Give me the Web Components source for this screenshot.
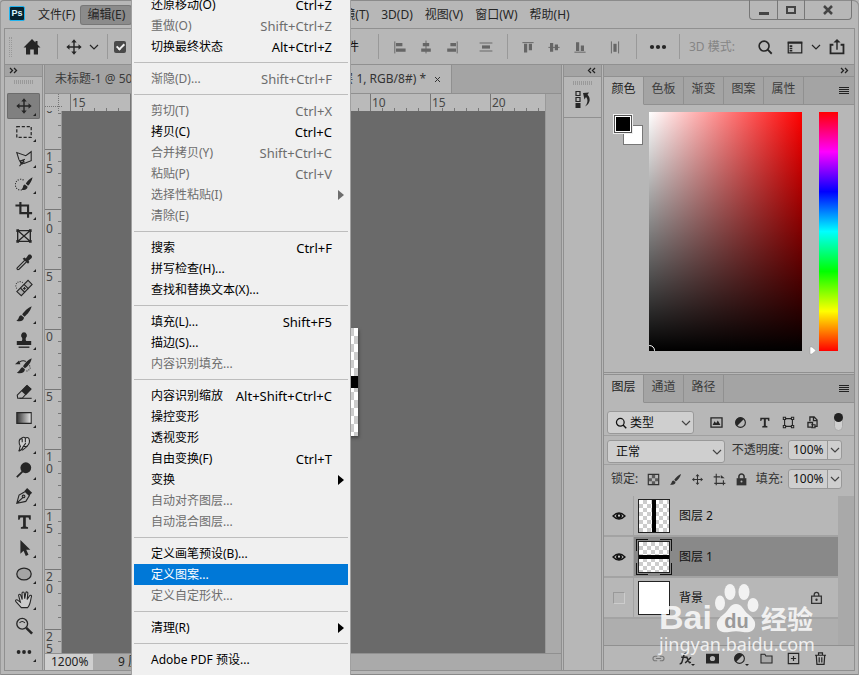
<!DOCTYPE html>
<html lang="zh-CN">
<head>
<meta charset="utf-8">
<title>Photoshop</title>
<style>
html,body{margin:0;height:100%;overflow:hidden}
body{font:12px/16px "Noto Sans","Noto Sans CJK SC",sans-serif;color:#262626;background:#b7b7b7;
--bg:#b7b7b7;--dark:#a4a4a4;--line:#909090;--field:#cfcfcf}
</style>
</head>
<body>
<ps-window>
  <ps-menubar slot="title"></ps-menubar>
  <ps-options slot="options"></ps-options>
  <ps-toolbar></ps-toolbar>
  <ps-document></ps-document>
  <ps-dock></ps-dock>
  <ps-panels></ps-panels>
  <ps-menu slot="menu">
    <ps-item key="Ctrl+Z">还原移动(O)</ps-item>
    <ps-item key="Shift+Ctrl+Z" off>重做(O)</ps-item>
    <ps-item key="Alt+Ctrl+Z">切换最终状态</ps-item>
    <ps-rule></ps-rule>
    <ps-item key="Shift+Ctrl+F" off>渐隐(D)...</ps-item>
    <ps-rule></ps-rule>
    <ps-item key="Ctrl+X" off>剪切(T)</ps-item>
    <ps-item key="Ctrl+C">拷贝(C)</ps-item>
    <ps-item key="Shift+Ctrl+C" off>合并拷贝(Y)</ps-item>
    <ps-item key="Ctrl+V" off>粘贴(P)</ps-item>
    <ps-item off more>选择性粘贴(I)</ps-item>
    <ps-item off>清除(E)</ps-item>
    <ps-rule></ps-rule>
    <ps-item key="Ctrl+F">搜索</ps-item>
    <ps-item>拼写检查(H)...</ps-item>
    <ps-item>查找和替换文本(X)...</ps-item>
    <ps-rule></ps-rule>
    <ps-item key="Shift+F5">填充(L)...</ps-item>
    <ps-item>描边(S)...</ps-item>
    <ps-item off>内容识别填充...</ps-item>
    <ps-rule></ps-rule>
    <ps-item key="Alt+Shift+Ctrl+C">内容识别缩放</ps-item>
    <ps-item>操控变形</ps-item>
    <ps-item>透视变形</ps-item>
    <ps-item key="Ctrl+T">自由变换(F)</ps-item>
    <ps-item more>变换</ps-item>
    <ps-item off>自动对齐图层...</ps-item>
    <ps-item off>自动混合图层...</ps-item>
    <ps-rule></ps-rule>
    <ps-item>定义画笔预设(B)...</ps-item>
    <ps-item active>定义图案...</ps-item>
    <ps-item off>定义自定形状...</ps-item>
    <ps-rule></ps-rule>
    <ps-item more>清理(R)</ps-item>
    <ps-rule></ps-rule>
    <ps-item>Adobe PDF 预设...</ps-item>
  </ps-menu>
  <ps-watermark slot="overlay"></ps-watermark>
</ps-window>

<script>
const RESET = `:host,*,*::before,*::after{box-sizing:border-box}
button,input,select{font:inherit;color:inherit;background:none;border:0;padding:0;margin:0;border-radius:0;appearance:none;outline:0}
button{display:flex;align-items:center;justify-content:center}`;

function define(name, css, html) {
  customElements.define(name, class extends HTMLElement {
    connectedCallback() {
      if (this.shadowRoot) return;
      const root = this.attachShadow({ mode: 'open' });
      root.innerHTML = `<style>${RESET}${css}</style>` + (typeof html === 'function' ? html(this) : html);
    }
  });
}

const CUR = 'fill="currentColor" stroke="none"';
const ICONS = {
  home: `<path ${CUR} d="M10 2 1.500 10.500H4V17.500h4.200v-5h3.600v5H16v-7h2.500L15.500 7.500V4h-2v1.500z"/>`,
  move: `<path d="M10 3v14M3 10h14" stroke-width="1.600"/><path ${CUR} d="m10 1.500 3 3.500H7zM10 18.500l3-3.500H7zM1.500 10 5 7v6zM18.500 10 15 7v6z"/>`,
  chevron: `<path d="m6 8 4 4 4-4"/>`,
  alignL: `<path d="M3.500 3v15"/><path ${CUR} d="M5 5h8v4H5zM5 12h12v4H5z"/>`,
  alignC: `<path d="M10 2v16"/><path ${CUR} d="M6 5h8v4H6zM4 12h12v4H4z"/>`,
  alignR: `<path d="M16.500 3v15"/><path ${CUR} d="M8 5h7v4H8zM4 12h11v4H4z"/>`,
  distV: `<path d="M2 5h16M2 15h16"/><path ${CUR} d="M5 8h10v4H5z"/>`,
  alignT: `<path d="M3 4.500h14"/><path ${CUR} d="M5 6h4v11H5zM11 6h4v8h-4z"/>`,
  alignM: `<path d="M3 10.500h14"/><path ${CUR} d="M5 5h4v11H5zM11 7h4v7h-4z"/>`,
  alignB: `<path d="M3 16.500h14"/><path ${CUR} d="M5 4h4v11H5zM11 8h4v7h-4z"/>`,
  distH: `<path d="M5.500 3v15M14.500 3v15"/><path ${CUR} d="M8 6h4v10H8z"/>`,
  dots: `<g ${CUR}><circle cx="4" cy="10" r="2.100"/><circle cx="10" cy="10" r="2.100"/><circle cx="16" cy="10" r="2.100"/></g>`,
  search: `<circle cx="9" cy="9" r="5.500" stroke-width="1.800"/><path d="m13 13 4.500 4.500" stroke-width="2"/>`,
  workspace: `<path d="M2.500 4.500h15v12h-15z" stroke-width="1.400"/><path d="M2 5.500h16" stroke-width="2"/><path ${CUR} d="M4 8h3v2H4zM4 10.700h3v1.600H4zM4 13h3v2H4z"/>`,
  share: `<path d="M6 7.500H2.800V17h14.400V7.500H14" stroke-width="2"/><path d="M10 13V3" stroke-width="1.600"/><path ${CUR} d="m10 1 4 4H6z"/>`,
  history: `<path d="M3 2.500h4v4H3zM3 8.500h4v4H3z" stroke-width="1.200"/><path ${CUR} d="M2.500 14h5v5h-5zM10 4l6-.5-1.500 2.200C18 9 17.500 14.500 12 17.500c3-3.500 3.200-7 1-9.500l-1.500 2.500z"/>`,
  burger: `<path d="M5 6.500h10M5 8.500h10M5 10.500h10M5 12.500h10" stroke-width="1" shape-rendering="crispEdges"/>`,
  marquee: `<path d="M2 4h16v12H2z" stroke-dasharray="3.500 2" stroke-width="1.400"/>`,
  lasso: `<path d="M4.500 12 2 4l10 3.500L18 3v10l-8 3M5 14l6-2.500M4.500 12.500l4 4M10 13l-5 6"/><circle cx="8" cy="14.500" r="2"/>`,
  quick: `<path d="M10 15.500A6 6 0 1 1 10 6" stroke-dasharray="1.200 1.500"/><path ${CUR} d="M19.500 2.500c-3 1.500-6 4.500-7.500 7l2.500 2.500C16.500 10 19 6 19.500 2.500zM11 10.500c-3 .5-1 3.500-4 5.500 3.500 1.500 7 0 7-3z"/>`,
  crop: `<path d="M6 1v12.500h13M.5 5h14v13.500" stroke-width="2.400"/>`,
  frame: `<path d="M3 4h14v12H3zM3 4l14 12M17 4 3 16" stroke-width="1.500"/><path ${CUR} d="M1.500 2.500h3v3h-3zM15.500 2.500h3v3h-3zM1.500 14.500h3v3h-3zM15.500 14.500h3v3h-3z"/>`,
  dropper: `<path d="m11 8-8.500 8.500c-1 1.500.5 2.500 2 1.500L13 9.500" stroke-width="1.300"/><path ${CUR} d="M8.500 6.500 10.500 5l1.500 1 3-4c2-1.500 5 1 3.500 3.500L15 8.500l1 1.500-1.500 2z"/>`,
  heal: `<path d="M2 10.500a4.500 4.500 0 1 1 7-6" stroke-dasharray="1 1.500"/><path fill="#aaa" d="M2 14 14.500 1.500 19 6 7 18.500z"/><path d="m6 10 5 5M10 6l5 5M10.500 9v3M9 10.500h3"/>`,
  brush: `<path ${CUR} d="M18.500 1.500c-4 1.500-8.500 6-10.500 9l2.500 2.500C14 10.500 17.500 6 18.500 1.500zM7 11.500c-3.500.5-2 4.500-5.500 6 4.500 1.500 8.500.2 8.500-3.500z"/>`,
  stamp: `<path ${CUR} d="M10 1.500a3.500 3.500 0 0 1 2.200 6c-.5 1-.4 2.500.3 3.500H18v4.500H2V11h5.500c.7-1 .8-2.500.3-3.500A3.500 3.500 0 0 1 10 1.500z"/><path d="M4 18h12" stroke-width="1.500"/>`,
  histbrush: `<path ${CUR} d="M18.500 1.500c-4 1.500-8 6-9.500 9l2 2C14.500 10.500 18 6 18.500 1.500zM8.500 11.500c-3 .5-2.500 4-6.500 6 4.500 1.500 9 0 9-4zM0 8l4.500-4L6 8z"/><path d="M5 5.500q4-2.500 7-.5"/><path d="M16 9.500q3 4-4 6.500" stroke-dasharray="1 1.500"/>`,
  eraser: `<path d="M2.500 13.500 13 3l4.500 3.500L8 17H3z" fill="#b7b7b7"/><path ${CUR} d="m7 9 6.500-7L18.500 7l-6.500 6.500z"/><path d="M5 17h13.500"/>`,
  gradient: `<defs><linearGradient id="g"><stop stop-color="#333"/><stop offset="1" stop-color="#e8e8e8"/></linearGradient></defs><path d="M2 4h16v12H2z" fill="url(#g)"/>`,
  smudge: `<path fill="#ccc" d="M4 18c2-2 .5-4 2-5.500C4 9.500 4 4.500 7 4c1-2 3.500-2 4.500-.5C13.500 2 16 3 16 6c.5 3-1 5-3 6.500M8 4v4M11.500 4v4M4 18q4-1 5-5l3-4M9 12.500l4 .5-5 4"/>`,
  dodge: `<circle ${CUR} cx="12" cy="7.500" r="6"/><path d="M8.500 11.500 2 18" stroke-width="2"/>`,
  pen: `<path d="M2 18 4.500 9l7-4L16 9.500 12 16zM2.500 17.500 9.500 11"/><circle cx="9.500" cy="10.500" r="1.500"/><path ${CUR} d="m10.500 4.500 3-3.500L19 6.500l-3 3z"/>`,
  type: `<path ${CUR} d="M3.500 2.500h14v5H16L15 5h-3v10l2.500.7V17.500h-8v-1.800L9 15V5H6L5 7.500H3.500z"/>`,
  select: `<path ${CUR} d="M6 1v15.500l3.500-3.500 2.500 6 3-1.500L12.500 12H17z"/>`,
  ellipse: `<ellipse cx="10" cy="10" rx="8" ry="6.500" fill="#a4a4a4" stroke-width="1.400"/>`,
  hand: `<path fill="#ccc" d="M7 18.500.8 11.500c-.8-1.500 1.200-2.500 2.500-1L6 12.500 4 5c0-1.800 2-2 2.500 0L8 9.500 7.800 2.500c0-1.800 2.300-1.800 2.500 0l.5 6 1.200-6.500c.3-1.500 2.400-1.200 2.300.3L13.500 9.500l2.500-4c1-1.500 2.800-.8 2.200 1-1.200 4.500-1 9-4.200 12z"/>`,
  zoom: `<circle cx="8" cy="7.500" r="6" stroke-width="1.500" fill="#bbb"/><path d="m12.500 12 6.500 6.500" stroke-width="2.800"/><path d="M5 6.500q3-3 6 0"/>`,
  image: `<path d="M1.500 3h17v14h-17z" stroke-width="2"/><path ${CUR} d="m4 14 3-6 2.500 3L12 7l4 7z"/>`,
  adjust: `<circle cx="10" cy="10" r="7.500" stroke-width="1.800"/><path ${CUR} d="M15.300 4.700A7.500 7.500 0 1 0 4.700 15.300z"/>`,
  shape: `<path d="M4 4h12v12H4z" stroke-width="1.700"/><path d="M2 2h3.500v3.500H2zM14.500 2H18v3.500h-3.500zM2 14.500h3.500V18H2zM14.500 14.500H18V18h-3.500z" fill="#b7b7b7" stroke-width="1.600"/>`,
  smart: `<path d="M6 8V1.500h6.500L17 6v10h-4M11.500 2v5H17" stroke-width="2"/><path ${CUR} fill-rule="evenodd" d="M2 9h9v9H2zm2 2v5h5v-5z"/><path d="M8 13.500h6V18H8" stroke-width="1.600"/>`,
  check: `<path d="M2 2h16v16H2z" stroke-width="1.800"/><path ${CUR} opacity=".7" d="M7.500 3h5v5h-5zM3 8h4.500v4.500H3zM12.500 8H17v4.500h-4.500zM7.500 12.500h5V17h-5z"/>`,
  artboard: `<path d="M5 1v18M1 6h10M16 11v8M2 16h17" stroke-width="1.700"/><path ${CUR} d="M12 3v5h6z"/>`,
  lock: `<path ${CUR} d="M2.500 8h15v11h-15z"/><path d="M6 9V5.500a4 4 0 0 1 8 0V9" stroke-width="2.400"/><circle cx="10" cy="13" r="1.500" fill="#b7b7b7" stroke="none"/>`,
  lockline: `<path d="M2.500 8h15v11h-15zM6.500 8V5.500a3.500 3.500 0 0 1 7 0V8" stroke-width="2"/><circle ${CUR} cx="10" cy="13.500" r="1.800"/>`,
  eye: `<path d="M1.500 10q8.500-9 17 0-8.500 9-17 0z" stroke-width="2"/><circle ${CUR} cx="10" cy="10" r="4.200"/><circle cx="10" cy="9.500" r="1.500" fill="#ccc" stroke="none"/>`,
  link: `<path d="M8 13.500H5a3.500 3.500 0 0 1 0-7h3M12 6.500h3a3.500 3.500 0 0 1 0 7h-3M6 10h8" stroke-width="1.700"/>`,
  fx: `<path d="M1 18q3 .5 4-4L7.500 5q1-3.500 4-3M3.500 8h7M10 8.500l2-.5 4 8.500 2.500-.5M18.500 8 9.500 17" stroke-width="2.200"/>`,
  mask: `<path ${CUR} fill-rule="evenodd" d="M0 2.500h20v15H0zM10 6a4 4 0 1 0 0 8 4 4 0 0 0 0-8z"/>`,
  folder: `<path d="M1.500 3.500h6L9 6h9.500v11h-17z" stroke-width="1.600" fill="#a8a8a8"/>`,
  plus: `<path d="M2 2h16v16H2zM10 6v8M6 10h8" stroke-width="1.800"/>`,
  trash: `<path d="M1.500 5h17M7 4.500V1.500h6v3M3.500 5l1 14h11l1-14M8 8v8M12 8v8" stroke-width="1.900"/>`
};
define('ps-icon', `:host{display:block;flex:none;width:var(--s,20px);height:var(--s,20px)}svg{display:block;width:100%;height:100%}`,
  el => `<svg viewBox="0 0 20 20" fill="none" stroke="currentColor" stroke-width="1.2" aria-hidden="true">${ICONS[el.getAttribute('name')]}</svg>`);

define('ps-window', `
:host{display:flex;flex-direction:column;height:100vh;position:relative;overflow:hidden;padding:0 4px 4px;background:var(--bg);border-radius:4px 6px 0 0;box-shadow:inset 0 1px #8b8b8b,inset 1px 0 #999,inset -1px 0 #999,inset 0 -1px #888}
main{flex:1;min-height:0;display:flex;flex-direction:column;border:1px solid var(--line)}
section{flex:1;min-height:0;display:flex;gap:1px}`,
`<slot name="title"></slot><main><slot name="options"></slot><section><slot></slot></section></main><slot name="menu"></slot><slot name="overlay"></slot>`);

define('ps-menubar', `
:host{display:flex;flex:none;height:28px;padding-left:5px}
.logo{width:16px;height:15px;margin-top:6px;border:1px solid #20b4f0;border-radius:2px;background:#06222f;color:#d8f4ff;font:bold 9px/12px "Liberation Sans",sans-serif;text-align:center}
nav{display:flex;margin:6px 0 4px 7px}
nav button{height:18px;padding:0 6px;border-radius:2px;white-space:nowrap}
nav .on{background:#8b8b8b;box-shadow:0 0 0 1px #777}
nav .gap{width:194px}
.win{display:flex;margin-left:auto;margin-right:3px;height:20px;border:1px solid #777;border-top:0;border-radius:0 0 4px 4px}
.win button+button{border-left:1px solid #777}
.win button{width:27px}.win button:last-child{width:47px}
svg{display:block}`,
`<div class="logo">Ps</div><nav>${['文件(F)','编辑(E)','','滤镜(T)','3D(D)','视图(V)','窗口(W)','帮助(H)'].map((t,i)=>t?`<button${i==1?' class="on"':''}>${t}</button>`:'<div class="gap"></div>').join('')}</nav>
<div class="win"><button aria-label="最小化"><svg width="12" height="12"><path d="M1 8h10v3H1z" fill="#444"/></svg></button><button aria-label="最大化"><svg width="12" height="12"><path d="M2 3h8v6H2z" fill="none" stroke="#444" stroke-width="2"/></svg></button><button aria-label="关闭"><svg width="12" height="12"><path d="m2 2 8 8M10 2l-8 8" stroke="#444" stroke-width="2.500"/></svg></button></div>`);

const btn = (n, l = n, c = '') => `<button class="${c}" aria-label="${l}"><ps-icon name="${n}"></ps-icon></button>`;
define('ps-options', `
:host{display:flex;flex:none;align-items:center;height:36px;border-bottom:1px solid var(--line)}
button{width:26px;flex:none;height:26px}
.grip{width:3px;height:20px;margin-left:4px;border:dotted #999;border-width:0 1px}
.home{width:34px;margin-left:3px}.mv{width:32px;--s:18px}.ch{width:8px}
i{width:1px;height:25px;background:#999;flex:none}
.a{--s:16px;color:#666}
input{width:12px;height:12px;border-radius:2px;background:#494949;display:grid;place-items:center;margin:0 7px 0 6px}
input:checked::after{content:"";width:5px;height:8px;border:solid #eee;border-width:0 2px 2px 0;rotate:45deg;margin-top:-2px}
.auto{display:flex;align-items:center;flex:none;white-space:nowrap;justify-content:space-between;width:251px}
.auto label{color:#111}
.mode{color:#858585;margin-left:9px;white-space:nowrap}
.r{margin-left:auto;display:flex;gap:4px;margin-right:4px;align-items:center}
.r button:not(.ch){--s:18px}`,
`<span class="grip"></span>${btn('home','主页','home')}<i style="margin-left:8px"></i>${btn('move','移动','mv')}${btn('chevron','展开','ch')}<i style="margin-left:9px"></i>
<div class="auto"><input type="checkbox" id="a" checked aria-label="自动选择"><label for="t">变换控件</label></div>
<i style="margin:0 8px 0 19px"></i>${btn('alignL','左对齐','a')}${btn('alignC','水平居中','a')}${btn('alignR','右对齐','a')}<span style="width:8px"></span>${btn('distV','垂直分布','a')}
<i style="margin:0 7px 0 8px"></i>${btn('alignT','顶对齐','a')}${btn('alignM','垂直居中','a')}${btn('alignB','底对齐','a')}<span style="width:9px"></span>${btn('distH','水平分布','a')}
<i style="margin:0 8px"></i>${btn('dots','更多')}<i style="margin-left:8px"></i><span class="mode">3D 模式:</span>
<div class="r">${btn('search','搜索')}${btn('workspace','工作区')}${btn('chevron','展开','ch')}${btn('share','共享')}</div>`);

const TOOLS = [['move','移动'],['marquee','选框'],['lasso','套索'],['quick','快速选择'],['crop','裁剪'],['frame','图框'],['dropper','吸管'],['heal','修复'],['brush','画笔'],['stamp','图章'],['histbrush','历史画笔'],['eraser','橡皮擦'],['gradient','渐变'],['smudge','涂抹'],['dodge','减淡'],['pen','钢笔'],['type','文字'],['select','路径选择'],['ellipse','椭圆'],['hand','抓手'],['zoom','缩放'],['dots','更多']];
const ARROWS = (left) => `<svg class="arr" width="9" height="7"><path d="${left ? 'M4 1 1.500 3.500 4 6M8 1 5.500 3.500 8 6' : 'm1 1 2.500 2.500L1 6M5 1l2.500 2.500L5 6'}" fill="none" stroke="#222" stroke-width="1.300"/></svg>`;
const HEAD = `.head{display:flex;align-items:center;height:12px;background:var(--dark);border-bottom:1px solid var(--line)}.grip{height:4px;width:20px;margin:3px auto 0;background:repeating-linear-gradient(90deg,#999 0 1px,transparent 1px 2px)}`;
define('ps-toolbar', `${HEAD}
:host{display:block;width:38px;flex:none;border-right:1px solid var(--line);overflow:hidden}
.head{padding-left:4px}
nav{display:flex;flex-direction:column;margin:9px 2px 0;--s:18px}
button{height:26px;position:relative;border-radius:2px}
button.on{background:#808080;box-shadow:inset 0 0 0 1px #6c6c6c}
button.c::after{content:"";position:absolute;right:4px;bottom:3px;border:solid transparent;border-width:0 0 3px 3px;border-bottom-color:#222}`,
`<div class="head">${ARROWS()}</div><div class="grip"></div><nav>${TOOLS.map(([n,l],i)=>btn(n,l,(i==0?'on ':'')+(i==5||i==20?'':'c'))).join('')}</nav>`);

define('ps-ruler', `
:host{display:flex;overflow:hidden;background:#bababa;color:#474747;font-size:12px;line-height:12px}
span{flex:none;display:block}
:host(:not([vertical])){padding-left:8px}
:host(:not([vertical])) span{width:60px;border-left:1px solid #777;padding:3px 0 0 1px;background:repeating-linear-gradient(90deg,transparent 0 11px,#777 11px 12px) 0 100%/60px 3px no-repeat}
:host([vertical]){flex-direction:column}
:host([vertical]) span{height:60px;border-top:1px solid #777;padding:1px 7px 0 1px;width:16px;word-break:break-all;background:repeating-linear-gradient(transparent 0 11px,#777 11px 12px) 100% 0/3px 60px no-repeat}
:host([vertical]) span:first-of-type{margin-top:-22px}`,
el => el.getAttribute('values').split(' ').map(v => `<span>${v}</span>`).join(''));

define('ps-document', `
:host{flex:1;min-width:0;display:flex;flex-direction:column;border:solid var(--line);border-width:0 1px}
.tabs{display:flex;height:29px;flex:none;background:var(--dark);border-bottom:1px solid var(--line);color:#333}
.tabs button{justify-content:flex-start;padding-left:10px;border-right:1px solid var(--line);white-space:nowrap;overflow:hidden}
.tabs .one{flex:0 0 146px;color:#3a3a3a}
.tabs .two{flex:0 0 261px;background:var(--bg);justify-content:flex-end;padding:0 10px}
.tabs svg{margin-left:8px}
.grid{flex:1;min-height:0;display:grid;grid-template:17px minmax(0,1fr)/17px minmax(0,1fr) 16px;background:#aaa}
.corner{background:repeating-linear-gradient(#777 0 1px,transparent 1px 2px) 13px 0/1px 100% no-repeat,repeating-linear-gradient(90deg,#777 0 1px,transparent 1px 2px) 0 12px/100% 1px no-repeat,#bababa}
.canvas{background:#6a6a6a;display:grid;place-items:center}
.art{width:108px;height:108px;background:linear-gradient(#000,#000) 0 48px/100% 12px no-repeat,conic-gradient(#fff 25%,#ccc 0 50%,#fff 0 75%,#ccc 0) 0 0/16px 16px;box-shadow:1px 2px 3px #444}
.v{grid-row:2;border-right:1px solid #999}
.bar{grid-column:3;grid-row:1/3;border-left:1px solid #999}
.status{height:17px;flex:none;display:flex;background:#aaa;border-top:1px solid var(--line);color:#222;white-space:nowrap}
.status span{width:48px;background:var(--field);padding-left:6px}
.status b{font-weight:400;padding-left:25px}`,
`<div class="tabs"><button class="one">未标题-1 @ 50%</button><button class="two">(图层 1, RGB/8#) *<svg width="7" height="7"><path d="m1 1 5 5M6 1 1 6" stroke="#333"/></svg></button></div>
<div class="grid"><div class="corner"></div><ps-ruler values="15 10 5 0 5 10 15 20"></ps-ruler><div class="bar"></div><ps-ruler class="v" vertical values="20 15 10 5 0 5 10 15 20 25"></ps-ruler><div class="canvas"><div class="art"></div></div></div>
<div class="status"><span>1200%</span><b>9 厘米</b></div>`);

define('ps-dock', `${HEAD}
:host{display:block;width:39px;flex:none;border:solid var(--line);border-width:0 1px}
.head{justify-content:flex-end;padding-right:5px}
.box{height:41px;border-bottom:1px solid var(--line);padding-top:1px}
.box button{width:100%;margin-top:4px}`,
`<div class="head">${ARROWS(1)}</div><div class="box"><div class="grip"></div>${btn('history','历史记录')}</div>`);

define('ps-tabs', `
:host{display:flex;height:28px;flex:none;background:var(--dark)}
button{width:40px;border:solid var(--line);border-width:0 1px 1px 0;color:#3c3c3c;padding-bottom:3px}
button:first-of-type{background:var(--bg);border-bottom-color:transparent;color:#222}
div{flex:1;display:flex;border-bottom:1px solid var(--line);align-items:center;justify-content:flex-end;color:#444}
div button:first-of-type{width:20px;border:0;padding:0;background:none}`,
el => el.getAttribute('names').split(' ').map(n => `<button>${n}</button>`).join('') + `<div>${btn('burger','面板菜单')}</div>`);

define('ps-color', `
:host{display:flex;padding:7px 16px 21px 9px;border-bottom:1px solid var(--line)}
.sw{position:relative;width:30px;height:32px;margin:2px 6px 0 0;flex:none}
.sw button{position:absolute;width:20px;height:20px}
.bg{left:10px;top:11px;background:#fff;border:1px solid #777}
.sw .fg{left:0;top:0;background:#000;border:1px solid #eee;box-shadow:inset 0 0 0 1px #555,inset 0 0 0 2px #fff}
.sb{flex:1;height:239px;background:linear-gradient(transparent,#000),linear-gradient(90deg,#fff,#f00);position:relative;overflow:hidden}
.sb::after{content:"";position:absolute;left:-5px;bottom:-5px;width:11px;height:11px;border:1px solid #fff;border-radius:50%}
.hue{width:19px;margin-left:17px;background:linear-gradient(red,#f0f,#00f,#0ff,#0f0,#ff0,red);position:relative}
.hue svg{position:absolute;left:-10px;bottom:-4px}`,
`<div class="sw"><button class="bg" aria-label="背景色"></button><button class="fg" aria-label="前景色"></button></div><div class="sb"></div><div class="hue"><svg width="8" height="9"><path d="M1 1h2l4 3.500L3 8H1z" fill="#fff" stroke="#999" stroke-width=".5"/></svg></div>`);

define('ps-pick', `
:host{display:flex;position:relative;height:23px;background:var(--field);border:1px solid #999;border-radius:3px;align-items:center;color:#111}
select{flex:1;min-width:0;height:100%;padding-left:8px;padding-right:16px;position:relative}
:host([search]) select{padding-left:22px}
ps-icon{position:absolute;--s:20px;right:-3px;pointer-events:none;color:#444}
.s{left:6px;--s:14px;color:#111}`,
el => (el.hasAttribute('search') ? '<ps-icon class="s" name="search"></ps-icon>' : '') + `<select aria-label="${el.getAttribute('label')}"><option>${el.getAttribute('value')}</option></select><ps-icon name="chevron"></ps-icon>`);

define('ps-percent', `
:host{display:flex;align-items:center;gap:5px;flex:none;color:#333}
div{display:flex;width:54px;height:20px;border:1px solid #999;border-radius:3px;background:var(--field);color:#111}
input{width:38px;padding-left:4px}
button{flex:1;border-left:1px solid #999;--s:20px;overflow:hidden;color:#444}label{white-space:nowrap}`,
el => `<label for="v">${el.getAttribute('label')}:</label><div><input id="v" value="100%">${btn('chevron','调整')}</div>`);

define('ps-layer', `
:host{display:flex;height:41px;border-bottom:2px solid #a3a3a3;color:#111}
.eye{width:30px;flex:none;border-right:1px solid #a3a3a3;--s:14px}
.eye i{width:12px;height:12px;border:1px solid #999;border-color:#999 #ccc #ccc #999}
.body{flex:1;display:flex;align-items:center;padding-left:4px;gap:9px}
:host([on]) .body{background:#898989}
.thumb{width:32px;height:34px;border:1px solid #222;background:#fff}
.thumb.v{background:linear-gradient(#000,#000) 13px 0/4px 100% no-repeat,conic-gradient(#ccc 25%,#fff 0 50%,#ccc 0 75%,#fff 0) 0 0/8px 8px}
.thumb.h{height:32px;background:linear-gradient(#000,#000) 0 13px/100% 4px no-repeat,conic-gradient(#ccc 25%,#fff 0 50%,#ccc 0 75%,#fff 0) 0 0/8px 8px}
:host([on]) .wrap{margin:-2px;padding:2px;background:linear-gradient(90deg,#111 12px,transparent 12px 24px,#111 24px) 0 0/36px 1px no-repeat,linear-gradient(90deg,#111 12px,transparent 12px 24px,#111 24px) 0 100%/36px 1px no-repeat,linear-gradient(#111 12px,transparent 12px 24px,#111 24px) 0 0/1px 36px no-repeat,linear-gradient(#111 12px,transparent 12px 24px,#111 24px) 100% 0/1px 36px no-repeat}
.lk{margin-left:auto;margin-right:15px;--s:13px;color:#333}`,
el => { const k = el.getAttribute('kind');
  return `<button class="eye" aria-label="可见性">${k === 'bg' ? '<i></i>' : '<ps-icon name="eye"></ps-icon>'}</button><div class="body"><div class="wrap"><div class="thumb ${k}"></div></div><span><slot></slot></span>${k === 'bg' ? '<ps-icon class="lk" name="lockline"></ps-icon>' : ''}</div>`; });

define('ps-layers', `
:host{display:flex;flex-direction:column;flex:1;min-height:0}
.row{display:flex;border-bottom:1px solid #a0a0a0;padding:0 12px 0 3px;flex:none}
.r1{height:33px;padding-top:8px;--s:13px}.r1 ps-pick{width:87px;margin-right:10px}
.r1 button{width:24px;height:22px}
.tog{width:9px;height:18px;border-radius:5px;background:#d0d0d0;border:1px solid #aaa;margin:2px -1px 0 auto;display:flex}
.tog::before{content:"";width:9px;height:9px;border-radius:50%;background:#222;flex:none;margin:-1px}
.r2{height:29px;padding-top:4px}.r2 ps-pick{width:118px}
ps-percent{margin-left:auto;height:20px}
.r3{height:31px;padding-top:4px;border-bottom:0;--s:13px;color:#333}
.r3>span{width:35px;padding:2px 0 0 4px;white-space:nowrap}.r3 button{width:22px;height:20px}
.list{flex:1;min-height:0;display:grid;grid-template-columns:1fr 16px;background:#aeaeae;overflow:hidden}
ps-layer{background:var(--bg)}
.bar{background:#a9a9a9}
footer{display:flex;justify-content:flex-end;border-top:1px solid var(--line);height:25px;flex:none;--s:13px;padding-right:20px}
footer button{width:27px;position:relative}
footer button.m::after{content:"";position:absolute;right:4px;bottom:4px;border:2px solid transparent;border-top-color:#222;border-bottom:0}
footer button:first-child{color:#777}`,
`<div class="row r1"><ps-pick search label="滤镜" value="类型"></ps-pick>${btn('image','像素')}${btn('adjust','调整')}${btn('type','文字')}${btn('shape','形状')}${btn('smart','智能对象')}<input class="tog" type="checkbox" aria-label="滤镜开关" checked></div>
<div class="row r2"><ps-pick label="混合模式" value="正常"></ps-pick><ps-percent label="不透明度"></ps-percent></div>
<div class="row r3"><span>锁定:</span>${btn('check','透明像素')}${btn('brush','图像像素')}${btn('move','位置')}${btn('artboard','画板')}${btn('lock','全部')}<ps-percent label="填充"></ps-percent></div>
<div class="list"><div><ps-layer kind="v">图层 2</ps-layer><ps-layer kind="h" on>图层 1</ps-layer><ps-layer kind="bg">背景</ps-layer></div><div class="bar"></div></div>
<footer>${btn('link','链接')}${btn('fx','样式','m')}${btn('mask','蒙版')}${btn('adjust','调整','m')}${btn('folder','新建组')}${btn('plus','新建图层')}${btn('trash','删除')}</footer>`);

define('ps-panels', `${HEAD}
:host{display:flex;flex-direction:column;width:251px;flex:none;border-left:1px solid var(--line);min-height:0}
.head{justify-content:flex-end;padding-right:5px;flex:none}
.two{margin-top:1px;border-top:1px solid var(--line);flex:1;min-height:0;display:flex;flex-direction:column}`,
`<div class="head">${ARROWS()}</div><ps-tabs names="颜色 色板 渐变 图案 属性"></ps-tabs><ps-color></ps-color><div class="two"><ps-tabs names="图层 通道 路径"></ps-tabs><ps-layers></ps-layers></div>`);

define('ps-menu', `:host{display:flex;flex-direction:column;position:absolute;left:131px;top:-7px;width:220px;padding:0 2px 16px;background:#f0f0f0;border:1px solid #a0a0a0}`, `<slot></slot>`);
define('ps-rule', `:host{display:block;flex:none;height:11px;padding:5px 0}div{height:1px;background:#bdbdbd}`, `<div></div>`);
define('ps-item', `
:host{display:block;flex:none;height:21px;color:#000}
:host([off]){color:#6d6d6d}:host([active]){background:#0078d7;color:#fff}
button{width:100%;height:100%;justify-content:space-between;padding:0 16px 0 17px;white-space:nowrap;text-align:left}
:host([more]) button{padding-right:4px}
kbd{font:inherit;font-size:13px}`,
el => `<button><span><slot></slot></span>${el.hasAttribute('key') ? `<kbd>${el.getAttribute('key')}</kbd>` : ''}${el.hasAttribute('more') ? '<svg width="6" height="12"><path d="M0 1v10l6-5z" fill="currentColor"/></svg>' : ''}</button>`);

define('ps-watermark', `
:host{position:absolute;right:46px;bottom:20px;width:154px;pointer-events:none;color:rgba(255,255,255,.82);white-space:nowrap}
.top{display:flex;align-items:flex-end;justify-content:space-between}
.bai{font:bold 34px/32px "Liberation Sans",sans-serif}
.paw{position:relative;width:46px;height:50px;display:grid;place-items:end center}
.paw svg{position:absolute;left:0;top:0}
.paw span{position:relative;color:#999;font:bold 20px/24px "Liberation Sans",sans-serif}
.jy{font:bold 26px/30px "Noto Sans CJK SC",sans-serif}
.url{font-size:18px;line-height:22px}`,
`<div class="top"><span class="bai">Bai</span><div class="paw"><svg width="46" height="50" fill="currentColor"><ellipse cx="7" cy="20" rx="5" ry="7.500"/><ellipse cx="17" cy="9" rx="5.500" ry="8"/><ellipse cx="31" cy="9" rx="5.500" ry="8"/><ellipse cx="40" cy="22" rx="5.500" ry="7"/><path d="M23 21c6 0 7 6 12 10 5 4 8 7 7 12-1 6-7 7-12 6-5-1-9-1-14 0s-11 0-12-6c-1-5 2-8 7-12s6-10 12-10z"/></svg><span>du</span></div><span class="jy">经验</span></div><div class="url">jingyan.baidu.com</div>`);
</script>
</body>
</html>
